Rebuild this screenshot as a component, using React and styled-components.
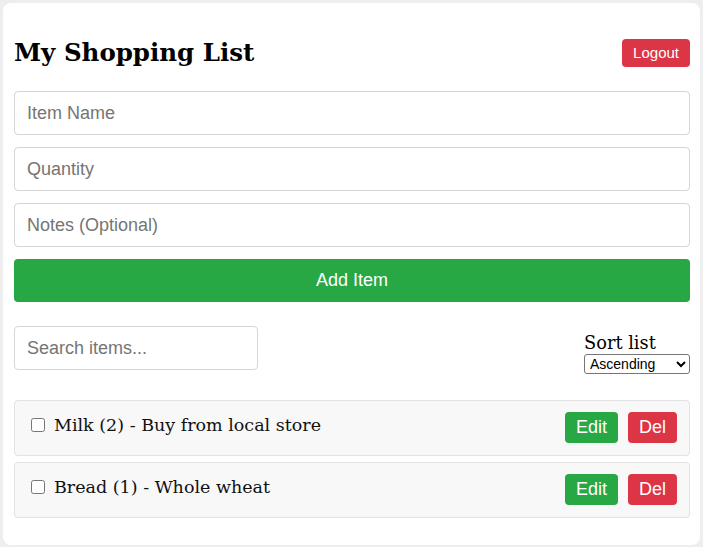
import React from 'react';
import styled, { createGlobalStyle } from 'styled-components';

const GlobalStyle = createGlobalStyle`
  html, body {
    margin: 0;
    padding: 0;
    background: #eeeeee;
  }
  body {
    font-family: "DejaVu Serif", Georgia, serif;
  }
`;

const items = [
  { id: 1, name: 'Milk', qty: 2, notes: 'Buy from local store' },
  { id: 2, name: 'Bread', qty: 1, notes: 'Whole wheat' },
];

const Page = styled.div`
  padding: 3px;
`;

const Card = styled.div`
  background: #ffffff;
  border-radius: 8px;
  padding: 11px 10px 27px 11px;
`;

const Header = styled.div`
  display: flex;
  align-items: center;
  justify-content: space-between;
  padding: 24px 0 24px;
`;

const Title = styled.h2`
  margin: 0;
  font-family: "DejaVu Serif", Georgia, serif;
  font-size: 24.5px;
  font-weight: bold;
  color: #000;
`;

const Button = styled.button`
  font-family: "Liberation Sans", Arial, sans-serif;
  font-size: ${(p) => p.$size || 18}px;
  color: #fff;
  background: ${(p) => (p.$variant === 'danger' ? '#dc3545' : '#28a745')};
  border: none;
  border-radius: 4px;
  padding: ${(p) => p.$pad || '5px 11px'};
  line-height: 21px;
  cursor: pointer;
`;

const Form = styled.div`
  display: flex;
  flex-direction: column;
  gap: 12px;
`;

const Input = styled.input`
  box-sizing: border-box;
  width: ${(p) => p.$width || '100%'};
  height: 44px;
  padding: 0 12px;
  border: 1px solid #d6d6d6;
  border-radius: 4px;
  font-family: "Liberation Sans", Arial, sans-serif;
  font-size: 18px;
  color: #333;
  &::placeholder {
    color: #757575;
  }
`;

const AddButton = styled(Button)`
  height: 43px;
  width: 100%;
`;

const Controls = styled.div`
  display: flex;
  align-items: flex-start;
  justify-content: space-between;
  margin: 24px 0 26px;
`;

const SortBox = styled.div`
  display: flex;
  flex-direction: column;
  padding-top: 6px;
`;

const SortLabel = styled.label`
  font-family: "DejaVu Serif", Georgia, serif;
  font-size: 17.8px;
  line-height: 22px;
  color: #000;
`;

const Select = styled.select`
  width: 106px;
  height: 20px;
  font-family: "Liberation Sans", Arial, sans-serif;
  font-size: 14px;
  border: 1px solid #767676;
  border-radius: 3px;
  background: #fff;
  padding: 0 1px;
`;

const List = styled.ul`
  list-style: none;
  margin: 0;
  padding: 0;
  display: flex;
  flex-direction: column;
  gap: 6px;
`;

const Item = styled.li`
  display: flex;
  align-items: center;
  justify-content: space-between;
  background: #f8f8f8;
  border: 1px solid #e2e2e2;
  border-radius: 4px;
  padding: 11px 12px 12px;
`;

const ItemLabel = styled.label`
  display: flex;
  align-items: center;
  margin-top: -6px;
  font-family: "DejaVu Serif", Georgia, serif;
  font-size: 17.5px;
  color: #111;
`;

const Check = styled.input`
  width: 14px;
  height: 14px;
  margin: 3px 9px 3px 4px;
`;

const Actions = styled.div`
  display: flex;
  gap: 10px;
`;

export default function App() {
  return (
    <>
      <GlobalStyle />
      <Page>
        <Card>
          <Header>
            <Title>My Shopping List</Title>
            <Button $variant="danger" $size={15} $pad="3px 11px 4px">
              Logout
            </Button>
          </Header>
          <Form>
            <Input placeholder="Item Name" />
            <Input placeholder="Quantity" />
            <Input placeholder="Notes (Optional)" />
            <AddButton>Add Item</AddButton>
          </Form>
          <Controls>
            <Input $width="244px" placeholder="Search items..." />
            <SortBox>
              <SortLabel>Sort list</SortLabel>
              <Select defaultValue="asc">
                <option value="asc">Ascending</option>
                <option value="desc">Descending</option>
              </Select>
            </SortBox>
          </Controls>
          <List>
            {items.map((it) => (
              <Item key={it.id}>
                <ItemLabel>
                  <Check type="checkbox" />
                  {it.name} ({it.qty}) - {it.notes}
                </ItemLabel>
                <Actions>
                  <Button>Edit</Button>
                  <Button $variant="danger">Del</Button>
                </Actions>
              </Item>
            ))}
          </List>
        </Card>
      </Page>
    </>
  );
}
